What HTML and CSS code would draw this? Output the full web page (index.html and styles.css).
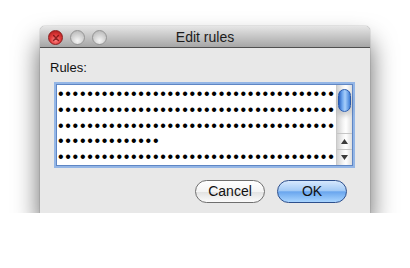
FILE: index.html
```html
<!DOCTYPE html>
<html>
<head>
<meta charset="utf-8">
<link rel="stylesheet" href="styles.css">
</head>
<body>
<div class="window">
  <div class="titlebar">
    <div class="lights">
      <span class="light close"><svg width="14" height="14" viewBox="0 0 14 14"><path d="M4.6 4.6 L9.4 9.4 M9.4 4.6 L4.6 9.4" stroke="#6b0c0c" stroke-width="1.4" stroke-linecap="round" opacity="0.75"/></svg></span>
      <span class="light"></span>
      <span class="light"></span>
    </div>
    <div class="title">Edit rules</div>
    <div class="spacer"></div>
  </div>
  <div class="content">
    <div class="label">Rules:</div>
    <div class="field">
      <div class="lines">
        <div class="line">••••••••••••••••••••••••••••••••••••••</div>
        <div class="line">••••••••••••••••••••••••••••••••••••••</div>
        <div class="line">••••••••••••••••••••••••••••••••••••••</div>
        <div class="line">••••••••••••••</div>
        <div class="line">••••••••••••••••••••••••••••••••••••••</div>
      </div>
      <div class="scrollbar">
        <div class="track"><div class="thumb"></div></div>
        <div class="arrow up"><svg width="9" height="7" viewBox="0 0 9 7"><path d="M4.5 1 L8 6 L1 6 Z" fill="#3a3a3a"/></svg></div>
        <div class="arrow down"><svg width="9" height="7" viewBox="0 0 9 7"><path d="M1 1 L8 1 L4.5 6 Z" fill="#3a3a3a"/></svg></div>
      </div>
    </div>
    <div class="buttons">
      <button class="btn cancel">Cancel</button>
      <button class="btn ok">OK</button>
    </div>
  </div>
</div>
</body>
</html>
```
FILE: styles.css
```css
html, body {
  margin: 0;
  padding: 0;
  background: #ffffff;
}
body {
  font-family: "Liberation Sans", Arial, sans-serif;
  padding: 26px 0 0 40px;
}
.window {
  width: 330px;
  height: 187px;
  background: #e8e8e8;
  border-radius: 5px 5px 0 0;
  box-shadow: 0 16px 26px rgba(0,0,0,0.62), 0 0 1px rgba(0,0,0,0.7);
  display: flex;
  flex-direction: column;
  overflow: hidden;
}
.titlebar {
  height: 21px;
  flex: none;
  background: linear-gradient(#e6e6e6, #c6c6c6 50%, #a6a6a6);
  border-bottom: 1px solid #505050;
  display: grid;
  grid-template-columns: 1fr auto 1fr;
  align-items: center;
}
.lights {
  display: flex;
  gap: 7px;
  padding-left: 8px;
  padding-top: 1px;
}
.light {
  width: 13px;
  height: 13px;
  border-radius: 50%;
  border: 0.5px solid #959595;
  background: radial-gradient(circle at 50% 75%, #f6f6f6 0%, #d6d6d6 45%, #b0b0b0 100%);
  display: block;
}
.light.close {
  border-color: #8c1f1f;
  background: radial-gradient(circle at 50% 70%, #ff8a8a 0%, #e23c3c 45%, #a31515 100%);
}
.light svg { display: block; }
.title {
  font-size: 14px;
  color: #1c1c1c;
  padding-top: 1px;
}
.content {
  flex: 1;
  display: flex;
  flex-direction: column;
  padding: 12px 15px 0 10px;
}
.label {
  font-size: 13px;
  line-height: 15px;
  color: #111;
}
.field {
  margin-top: 7px;
  margin-left: 4px;
  width: 295px;
  height: 80px;
  border: 1px solid #5f86c4;
  box-shadow: 0 0 0 2px #94b6e6;
  background: #fff;
  display: flex;
  align-self: flex-start;
  position: relative;
  left: 2px;
  top: 2px;
}
.lines {
  flex: 1;
  padding: 1px 0 0 1px;
  overflow: hidden;
}
.line {
  font-size: 16px;
  line-height: 15.8px;
  letter-spacing: 1.7px;
  white-space: nowrap;
  color: #000;
}
.scrollbar {
  width: 15px;
  display: flex;
  flex-direction: column;
  border-left: 1px solid #c9c9c9;
  background: linear-gradient(90deg, #d2d2d2, #f4f4f4 40%, #ffffff 60%, #dedede);
}
.track {
  flex: 1;
  padding: 4px 0 0 1px;
}
.thumb {
  width: 13px;
  height: 23px;
  border-radius: 6.5px;
  border: 1px solid #2a5aab;
  box-sizing: border-box;
  background: linear-gradient(90deg, #2a62c2, #6fa7ee 30%, #a8cffb 55%, #3f7fd8);
  box-shadow: 0 4px 5px rgba(0,0,0,0.18);
}
.arrow {
  height: 15px;
  display: flex;
  align-items: center;
  justify-content: center;
  border-top: 1px solid #c6c6c6;
}
.arrow svg { display: block; }
.buttons {
  display: flex;
  justify-content: flex-end;
  gap: 12px;
  margin-top: 16px;
  padding-right: 8px;
}
.btn {
  width: 70px;
  height: 23px;
  border-radius: 11.5px;
  font-family: "Liberation Sans", Arial, sans-serif;
  font-size: 14px;
  padding: 0;
  color: #111;
  line-height: 21px;
}
.cancel {
  border: 1px solid #6f6f6f;
  background: linear-gradient(#ffffff, #f4f4f4 50%, #e2e2e2 52%, #fbfbfb);
}
.ok {
  border: 1px solid #2d4f8c;
  background: linear-gradient(#d6e8fd, #a4cbf6 45%, #6aa6ee 52%, #a9d5ff);
}
```
